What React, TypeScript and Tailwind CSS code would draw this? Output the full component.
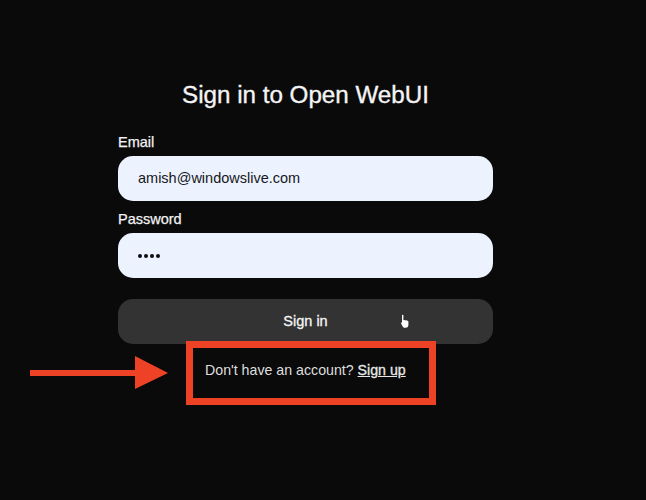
function Field({ label, value, dots }: { label: string; value: string; dots?: boolean }) {
  return (
    <div>
      <div className="text-[14.5px] leading-[18px] text-[#f2f2f2] mb-[5px] [-webkit-text-stroke:0.25px_#f2f2f2]">{label}</div>
      <div className="h-[45px] rounded-[15px] bg-[#edf3fe] px-[20px] flex items-center text-[#16181c]">
        {dots ? (
          <div className="flex gap-[2px]">
            <span className="w-[4px] h-[4px] rounded-full bg-[#0c0d10]" />
            <span className="w-[4px] h-[4px] rounded-full bg-[#0c0d10]" />
            <span className="w-[4px] h-[4px] rounded-full bg-[#0c0d10]" />
            <span className="w-[4px] h-[4px] rounded-full bg-[#0c0d10]" />
          </div>
        ) : (
          <span className="text-[14.5px]">{value}</span>
        )}
      </div>
    </div>
  );
}

export default function App() {
  return (
    <div
      className="relative w-[646px] h-[500px] overflow-hidden bg-[#0a0a0b] pt-[80px] pl-[118px]"
      style={{ fontFamily: '"Liberation Sans", Arial, sans-serif' }}
    >
      <div className="w-[375px]">
        <h1 className="text-center text-[24.2px] leading-[30px] font-normal text-[#f4f4f4] mb-[23px] [-webkit-text-stroke:0.35px_#f4f4f4]">
          Sign in to Open WebUI
        </h1>

        <div className="flex flex-col gap-[9px]">
          <Field label="Email" value="amish@windowslive.com" />
          <Field label="Password" value="••••" dots />
        </div>

        <button className="relative mt-[21px] w-full h-[45px] rounded-[15px] bg-[#333333] text-[14.5px] text-[#f5f5f5] [-webkit-text-stroke:0.3px_#f5f5f5]">
          Sign in
          {/* mouse cursor */}
          <svg className="absolute left-[281px] top-[15px]" width="12" height="15" viewBox="0 0 12 15">
            <path
              d="M3 1.2c0-.7 1.4-.7 1.4 0v5l.6-.2c.9-.2 1.2.1 1.4.4.7-.3 1.3-.2 1.6.3.7-.2 1.4.2 1.4 1v3c0 1.8-1 3-2.6 3H5.6c-1 0-1.6-.6-2.1-1.5L2 9.3c-.3-.7.5-1.2 1-.6V1.2z"
              fill="#ffffff"
            />
          </svg>
        </button>
      </div>

      {/* red annotation box */}
      <div className="absolute left-[186px] top-[341px] w-[250px] h-[64px] border-[7px] border-[#ee4227] flex items-center pl-[12px] pb-[4px] text-[14.2px] text-[#dedede] whitespace-nowrap">
        <span>
          Don't have an account?{' '}
          <span className="underline text-[#e8e8e8] [-webkit-text-stroke:0.3px_#e8e8e8]">Sign up</span>
        </span>
      </div>

      {/* red annotation arrow */}
      <svg className="absolute left-[28px] top-[354px]" width="142" height="38" viewBox="0 0 142 38">
        <rect x="2" y="16" width="106" height="6" fill="#ee4227" />
        <polygon points="107,2 140,19 107,35" fill="#ee4227" />
      </svg>
    </div>
  );
}
